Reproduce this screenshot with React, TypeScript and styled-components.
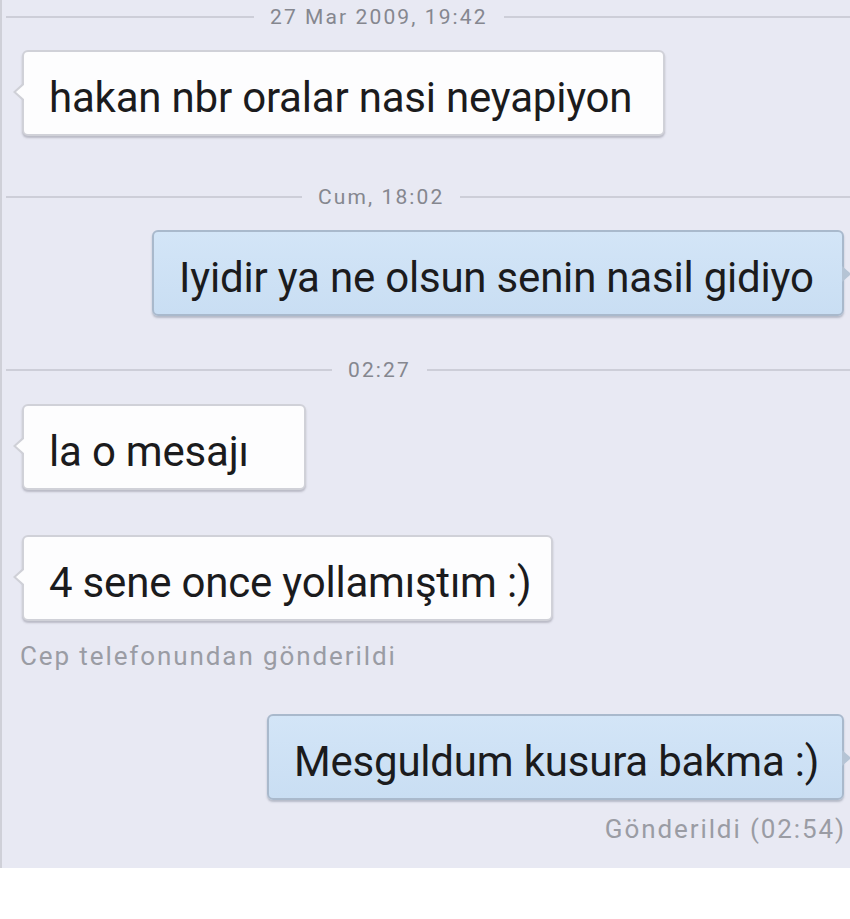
import React from "react";
import styled, { createGlobalStyle, css } from "styled-components";

const Global = createGlobalStyle`
  html, body { margin: 0; padding: 0; background: #ffffff; }
  body { font-family: Roboto, "Noto Sans", Arial, sans-serif; }
`;

const Screen = styled.div`
  width: 850px;
  height: 868px;
  background: #e8e9f3;
  border-left: 2px solid #cfd0d8;
  box-sizing: border-box;
  display: flex;
  flex-direction: column;
  overflow: hidden;
`;

const Divider = styled.div<{ $mt: number; $left: number }>`
  margin-top: ${(p) => p.$mt}px;
  height: 34px;
  display: grid;
  grid-template-columns: ${(p) => p.$left}px auto 1fr;
  align-items: center;
  column-gap: 16px;
  padding-left: 4px;
  &::before, &::after {
    content: "";
    height: 2px;
    background: #cdced8;
  }
  &::before { grid-column: 1; }
  &::after { grid-column: 3; }
`;

const DividerText = styled.span`
  grid-column: 2;
  grid-row: 1;
  font-family: Roboto, sans-serif;
  font-size: 21px;
  color: #85878f;
  letter-spacing: 2.1px;
`;

const Row = styled.div<{ $mt: number; $sent?: boolean }>`
  margin-top: ${(p) => p.$mt}px;
  display: flex;
  justify-content: ${(p) => (p.$sent ? "flex-end" : "flex-start")};
  padding: ${(p) => (p.$sent ? "0 6px 0 0" : "0 0 0 20px")};
`;

const Bubble = styled.div<{ $sent?: boolean; $w: number }>`
  position: relative;
  width: ${(p) => p.$w}px;
  height: 86px;
  box-sizing: border-box;
  display: flex;
  align-items: center;
  padding: 9px 0 0 25px;
  border-radius: 6px;
  font-family: Roboto, sans-serif;
  font-size: 42px;
  letter-spacing: -0.2px;
  color: #1b1b1d;
  white-space: nowrap;
  ${(p) =>
    p.$sent
      ? css`
          background: linear-gradient(#d3e5f7, #c9def3);
          border: 2px solid #a9b9cc;
          box-shadow: 0 2px 2px rgba(90, 100, 120, 0.35);
          &::after {
            content: "";
            position: absolute;
            right: -9px;
            top: 34px;
            border-left: 9px solid #b5c4d5;
            border-top: 8px solid transparent;
            border-bottom: 8px solid transparent;
          }
        `
      : css`
          background: #fdfdfe;
          border: 2px solid #d0d1d8;
          box-shadow: 0 2px 2px rgba(100, 100, 115, 0.35);
          &::before {
            content: "";
            position: absolute;
            left: -11px;
            top: 30px;
            border-right: 11px solid #cfd0d7;
            border-top: 10px solid transparent;
            border-bottom: 10px solid transparent;
          }
          &::after {
            content: "";
            position: absolute;
            left: -8px;
            top: 32px;
            border-right: 9px solid #fdfdfe;
            border-top: 8px solid transparent;
            border-bottom: 8px solid transparent;
          }
        `}
`;

const Meta = styled.div<{ $mt: number; $sent?: boolean }>`
  margin-top: ${(p) => p.$mt}px;
  height: 26px;
  line-height: 26px;
  font-family: Roboto, sans-serif;
  font-size: 26px;
  color: #9a9ca4;
  letter-spacing: 1.9px;
  white-space: nowrap;
  text-align: ${(p) => (p.$sent ? "right" : "left")};
  padding: ${(p) => (p.$sent ? "0 4px 0 0" : "0 0 0 18px")};
`;

export default function App() {
  return (
    <>
      <Global />
      <Screen>
        <Divider $mt={0} $left={248}>
          <DividerText>27 Mar 2009, 19:42</DividerText>
        </Divider>
        <Row $mt={16}>
          <Bubble $w={643}>hakan nbr oralar nasi neyapiyon</Bubble>
        </Row>
        <Divider $mt={44} $left={296}>
          <DividerText>Cum, 18:02</DividerText>
        </Divider>
        <Row $mt={16} $sent>
          <Bubble $sent $w={692}>Iyidir ya ne olsun senin nasil gidiyo</Bubble>
        </Row>
        <Divider $mt={37} $left={326}>
          <DividerText>02:27</DividerText>
        </Divider>
        <Row $mt={17}>
          <Bubble $w={284}>la o mesajı</Bubble>
        </Row>
        <Row $mt={45}>
          <Bubble $w={531}>4 sene once yollamıştım :)</Bubble>
        </Row>
        <Meta $mt={22}>Cep telefonundan gönderildi</Meta>
        <Row $mt={45} $sent>
          <Bubble $sent $w={577}>Mesguldum kusura bakma :)</Bubble>
        </Row>
        <Meta $mt={16} $sent>Gönderildi (02:54)</Meta>
      </Screen>
    </>
  );
}
